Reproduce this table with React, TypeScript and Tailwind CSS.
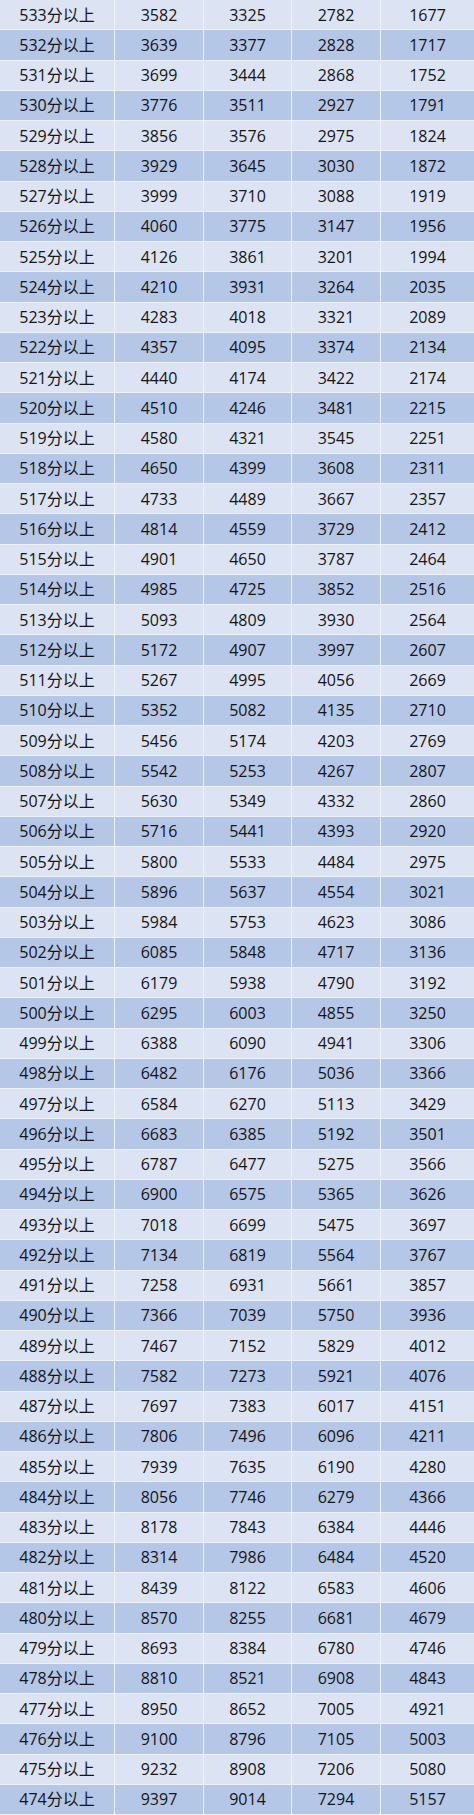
import React from "react";

const raw = `533 3582 3325 2782 1677
532 3639 3377 2828 1717
531 3699 3444 2868 1752
530 3776 3511 2927 1791
529 3856 3576 2975 1824
528 3929 3645 3030 1872
527 3999 3710 3088 1919
526 4060 3775 3147 1956
525 4126 3861 3201 1994
524 4210 3931 3264 2035
523 4283 4018 3321 2089
522 4357 4095 3374 2134
521 4440 4174 3422 2174
520 4510 4246 3481 2215
519 4580 4321 3545 2251
518 4650 4399 3608 2311
517 4733 4489 3667 2357
516 4814 4559 3729 2412
515 4901 4650 3787 2464
514 4985 4725 3852 2516
513 5093 4809 3930 2564
512 5172 4907 3997 2607
511 5267 4995 4056 2669
510 5352 5082 4135 2710
509 5456 5174 4203 2769
508 5542 5253 4267 2807
507 5630 5349 4332 2860
506 5716 5441 4393 2920
505 5800 5533 4484 2975
504 5896 5637 4554 3021
503 5984 5753 4623 3086
502 6085 5848 4717 3136
501 6179 5938 4790 3192
500 6295 6003 4855 3250
499 6388 6090 4941 3306
498 6482 6176 5036 3366
497 6584 6270 5113 3429
496 6683 6385 5192 3501
495 6787 6477 5275 3566
494 6900 6575 5365 3626
493 7018 6699 5475 3697
492 7134 6819 5564 3767
491 7258 6931 5661 3857
490 7366 7039 5750 3936
489 7467 7152 5829 4012
488 7582 7273 5921 4076
487 7697 7383 6017 4151
486 7806 7496 6096 4211
485 7939 7635 6190 4280
484 8056 7746 6279 4366
483 8178 7843 6384 4446
482 8314 7986 6484 4520
481 8439 8122 6583 4606
480 8570 8255 6681 4679
479 8693 8384 6780 4746
478 8810 8521 6908 4843
477 8950 8652 7005 4921
476 9100 8796 7105 5003
475 9232 8908 7206 5080
474 9397 9014 7294 5157`;

const rows = raw.split("\n").map((l) => l.trim().split(/\s+/));

export default function App() {
  return (
    <div
      className="w-[474px] h-[1815px] flex flex-col bg-white text-[16px] text-[#151515]"
      style={{ fontFamily: '"Open Sans", "Noto Sans CJK SC", sans-serif' }}
    >
      {rows.map((r, i) => (
        <div
          key={r[0]}
          className={`flex-1 grid grid-cols-[115px_89px_88px_89px_1fr] border-b border-[#eef2fa] ${
            i % 2 === 0 ? "bg-[#dce3f2]" : "bg-[#b5c7e6]"
          }`}
        >
          <div className="flex items-center justify-center border-r border-[#eef2fa]">
            {r[0]}分以上
          </div>
          <div className="flex items-center justify-center border-r border-[#eef2fa]">{r[1]}</div>
          <div className="flex items-center justify-center border-r border-[#eef2fa]">{r[2]}</div>
          <div className="flex items-center justify-center border-r border-[#eef2fa]">{r[3]}</div>
          <div className="flex items-center justify-center">{r[4]}</div>
        </div>
      ))}
    </div>
  );
}
